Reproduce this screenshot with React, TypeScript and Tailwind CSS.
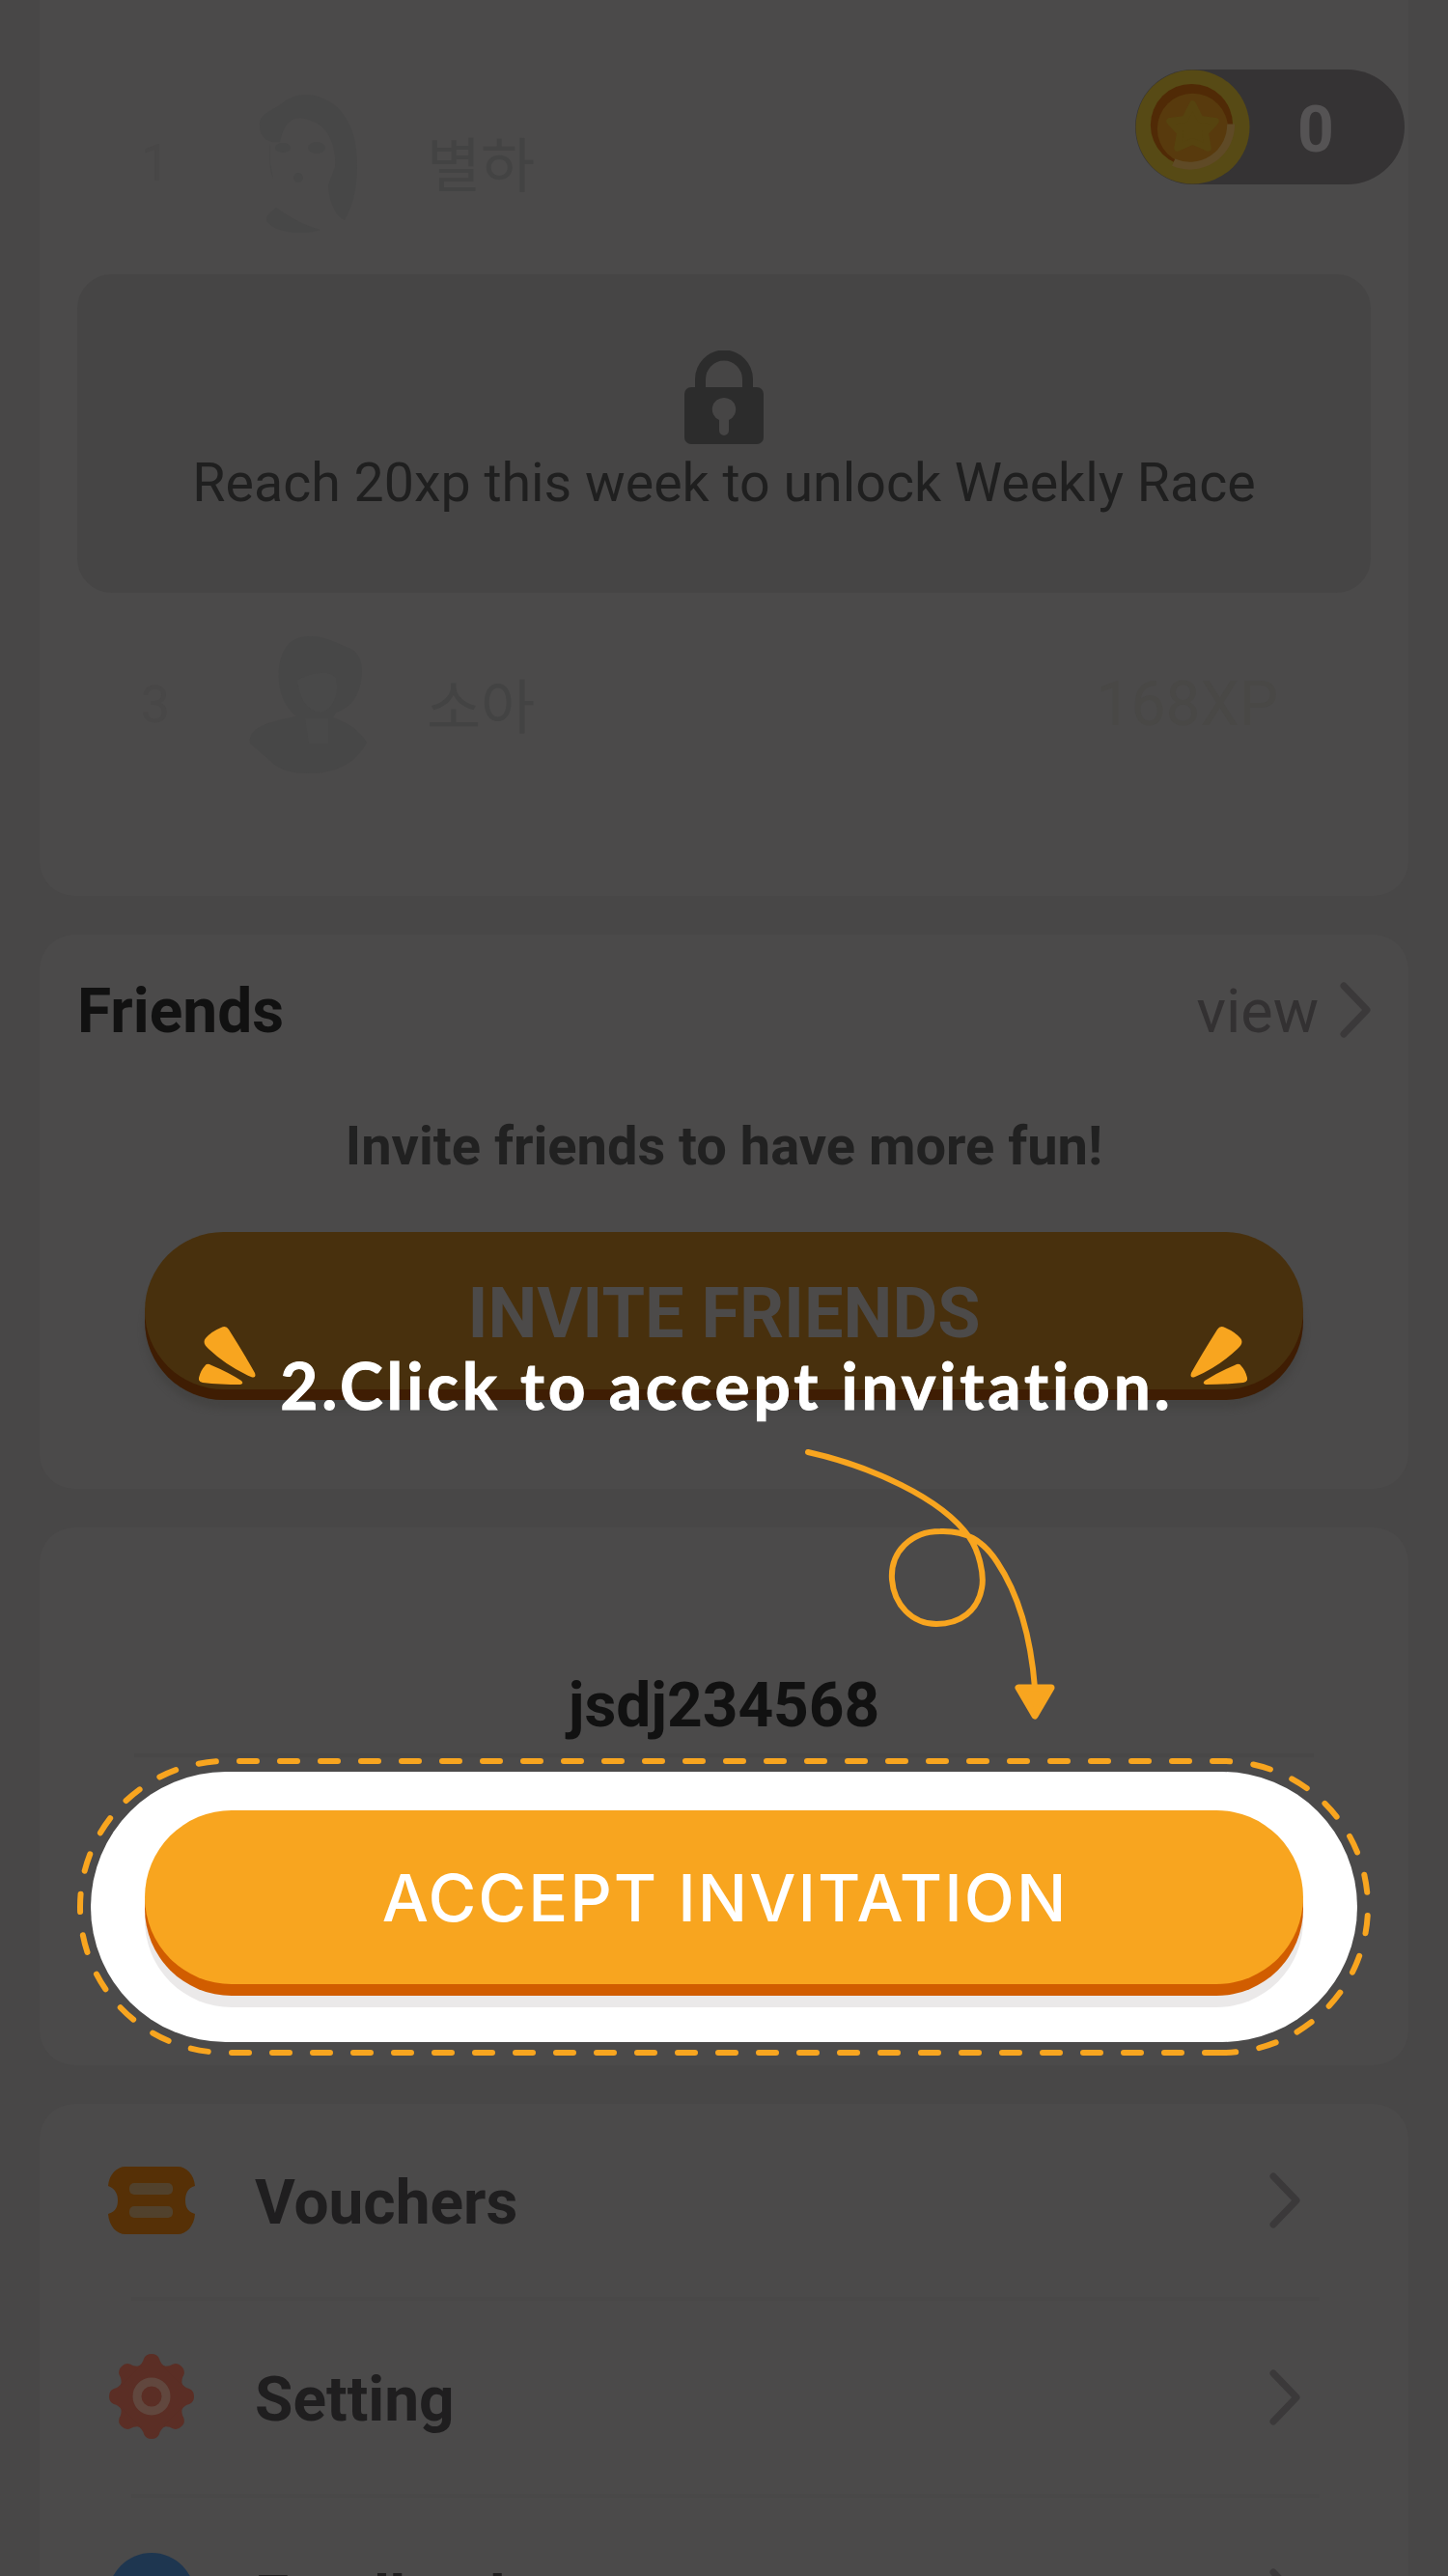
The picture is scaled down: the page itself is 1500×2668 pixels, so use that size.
import React from "react";

const ORANGE = "#f8a51f";

function Chevron({ className }: { className: string }) {
  return (
    <svg viewBox="0 0 32 58" className={className} fill="none" stroke="#3b393a" strokeWidth="7" strokeLinecap="round" strokeLinejoin="round">
      <path d="M4 4 28 29 4 54" />
    </svg>
  );
}

function Coin() {
  return (
    <svg viewBox="0 0 120 120" className="size-[119px] shrink-0">
      <circle cx="60" cy="60" r="59.5" fill="#574a15" />
      <circle cx="59" cy="58" r="43" fill="#502a06" />
      <circle cx="60" cy="62" r="37" fill="#583a0d" />
      <path d="M100 57A43 43 0 0 1 40 97" fill="none" stroke="#5f4a26" strokeWidth="8" />
      <path d="M60 36 68 52 84 54 73 66 76 82 60 75 44 82 47 66 36 54 52 52Z" fill="#56430f" stroke="#56430f" strokeWidth="7" strokeLinejoin="round" />
    </svg>
  );
}

function GirlAvatar() {
  return (
    <svg viewBox="0 0 124 144" className="h-[144px] w-[124px]" fill="#474747">
      <path d="M13 33C12 20 27 18 36 10C53-5 82 0 97 18C109 32 114 51 114 75C114 101 108 118 101 131C91 127 85 111 84 95L91 76C93 52 82 33 68 29C48 19 38 30 34 50C19 52 13 43 13 33Z" />
      <path d="M24 52C22 70 24 80 27 88L24 72Z M30 118C44 128 58 136 76 141C55 148 28 143 20 132C20 124 25 123 30 118Z" />
      <ellipse cx="37" cy="56" rx="8" ry="5" />
      <ellipse cx="72" cy="56" rx="9" ry="6" />
      <circle cx="53" cy="87" r="5" />
    </svg>
  );
}

function BoyAvatar() {
  return (
    <svg viewBox="0 0 124 144" className="h-[144px] w-[124px]" fill="#474747">
      <path d="M33 48C31 16 44 1 64 1C80 0 92 8 108 14C119 22 121 34 117 52C113 68 104 76 92 80L89 85C104 91 114 96 124 111C112 133 91 143 65 143C45 143 32 139 24 130L3 112C1 98 14 91 51 84C40 75 34 62 33 48Z" />
      <path d="M52 46C64 40 84 34 92 44C96 62 88 78 76 80C62 78 54 66 52 46Z" fill="#494949" />
      <path d="M60 86 84 86 84 112 64 112Z" fill="#494949" />
    </svg>
  );
}

function RaceRow({ rank, name, xp, children }: { rank: string; name: string; xp: string; children: React.ReactNode }) {
  return (
    <div className="flex h-[144px] items-center text-[#434343]">
      <div className="w-[162px] text-center text-[54px] leading-none text-[#484747]">{rank}</div>
      <div className="ml-[14px]">{children}</div>
      <div className="ml-[62px] flex-1 pb-[3px] font-['Noto_Sans_CJK_KR',sans-serif] text-[61px] leading-none">{name}</div>
      <div className="mr-[96px] text-[64px] leading-none text-[#494846]">{xp}</div>
    </div>
  );
}

function VoucherIcon() {
  return (
    <svg viewBox="0 0 90 70" className="h-[70px] w-[90px]">
      <path d="M18 0H72C81 0 89 8 90 20C82 22 80 29 80 35S82 47 90 49C89 62 81 70 72 70H18C9 70 1 62 0 49C8 47 10 41 10 35S8 23 0 20C1 8 9 0 18 0Z" fill="#563006" />
      <rect x="22" y="17" width="45" height="12" rx="5" fill="#51412c" />
      <rect x="22" y="41" width="45" height="12" rx="5" fill="#51412c" />
    </svg>
  );
}

function GearIcon() {
  return (
    <svg viewBox="-45 -45 90 90" className="-mt-[3px] size-[90px]">
      <g fill="#5b2e25">
        <circle r="34" />
        {[0, 45, 90, 135, 180, 225, 270, 315].map((a) => (
          <path key={a} transform={`rotate(${a})`} d="M-15-30Q-9-34-8-39Q-6-44 0-44T8-39Q9-34 15-30Z" />
        ))}
      </g>
      <circle r="15" fill="none" stroke="#61473e" strokeWidth="9" />
    </svg>
  );
}

function MenuRow({ icon, label, divider = true }: { icon: React.ReactNode; label: string; divider?: boolean }) {
  return (
    <div className="flex h-[204px] shrink-0 flex-col pl-[71px] pr-[92px]">
      <div className="flex flex-1 items-center">
        {icon}
        <span className="ml-[62px] flex-1 pt-[6px] text-[64px] font-bold leading-none text-[#1f1e1f]">{label}</span>
        <Chevron className="mr-[20px] h-[58px] w-[32px]" />
      </div>
      {divider && <div className="ml-[24px] h-[4px] bg-[#494848]" />}
    </div>
  );
}

function Sparks({ className }: { className: string }) {
  return (
    <svg viewBox="0 0 60 62" className={className} fill={ORANGE}>
      <path d="M23 2Q28-1 31 4Q48 31 58 49Q60 55 54 53Q29 42 10 24Q3 18 7 13Q13 6 23 2Z" />
      <path d="M6 42Q8 38 13 41Q30 48 44 57Q47 60 43 61Q22 61 4 59Q-1 58 0 54Q2 46 6 42Z" />
    </svg>
  );
}

function LoopArrow() {
  return (
    <svg viewBox="830 1496 264 288" className="absolute left-[830px] top-[1496px] h-[288px] w-[264px]">
      <path
        d="M837 1504C900 1518 975 1551 1004 1592C1014 1606 1020 1631 1017 1645C1013 1668 995 1682 970 1682C945 1682 926 1662 924 1636C922 1607 944 1586 974 1586C1000 1585 1018 1595 1033 1618C1057 1654 1068 1698 1072 1748"
        fill="none"
        stroke={ORANGE}
        strokeWidth="6"
        strokeLinecap="round"
      />
      <path d="M1055 1748H1089L1072 1777Z" fill={ORANGE} stroke={ORANGE} strokeWidth="7" strokeLinejoin="round" />
    </svg>
  );
}

function DashedOutline() {
  return (
    <svg
      viewBox="79 1820 1342 310"
      className="absolute -left-[15px] -top-[15px] h-[310px] w-[1342px] max-w-none"
      fill="none"
      stroke={ORANGE}
      strokeWidth="6"
      strokeLinecap="round"
      strokeDasharray="18 24"
    >
      <path d="M1266 2126H234" />
      <path d="M234 2126A151 151 0 0 1 234 1824" pathLength={466} strokeDashoffset={1032} />
      <path d="M234 1824H1266" strokeDashoffset={1498} />
      <path d="M1266 1824A151 151 0 0 1 1266 2126" pathLength={466} strokeDashoffset={2530} />
    </svg>
  );
}

export default function App() {
  return (
    <div className="relative flex h-[2668px] w-[1500px] flex-col gap-[40px] overflow-hidden bg-[#484747] px-[41px] font-[Roboto,sans-serif]">
      <section className="h-[928px] shrink-0 rounded-b-[36px] bg-[#4b4a4a] px-[39px] pt-[97px]">
        <RaceRow rank="1" name="별하" xp="">
          <GirlAvatar />
        </RaceRow>
        <div className="mt-[43px] flex h-[330px] flex-col items-center rounded-[36px] bg-[#464545] pt-[79px]">
          <svg viewBox="0 0 82 98" className="h-[98px] w-[82px]">
            <path d="M16.500 44V30a24.500 25 0 0 1 49 0V44" fill="none" stroke="#2c2c2c" strokeWidth="11" />
            <rect y="38" width="82" height="59" rx="7" fill="#2c2c2c" />
            <path d="M41 49a12 12 0 0 1 5 23V83a5 5 0 0 1-10 0V72a12 12 0 0 1 5-23Z" fill="#464545" />
          </svg>
          <p className="mt-[8px] whitespace-nowrap text-[55.500px] leading-[64px] text-[#1f1f1f]">Reach 20xp this week to unlock Weekly Race</p>
        </div>
        <div className="mt-[44px]">
          <RaceRow rank="3" name="소아" xp="168XP">
            <BoyAvatar />
          </RaceRow>
        </div>
      </section>

      <section className="flex h-[574px] shrink-0 flex-col rounded-[36px] bg-[#4b4a4a] px-[39px] pt-[40px]">
        <div className="flex h-[76px] items-center">
          <h2 className="flex-1 pt-[3px] text-[64px] font-bold leading-none text-[#111]">Friends</h2>
          <span className="pt-[3px] text-[63px] leading-none text-[#333132]">view</span>
          <Chevron className="ml-[22px] h-[58px] w-[32px]" />
        </div>
        <p className="mt-[70px] text-center text-[56px] font-bold leading-[66px] text-[#212121]">Invite friends to have more fun!</p>
        <button className="mx-[70px] mt-[56px] h-[163px] rounded-[82px] bg-[#48300d] pt-[7px] text-[72px] font-bold leading-none text-[#4c4a49] shadow-[0_11px_0_#3f1d03,0_20px_6px_#454443]">
          INVITE FRIENDS
        </button>
      </section>

      <section className="flex h-[557px] shrink-0 flex-col rounded-[36px] bg-[#4b4a4a] px-[98px] pt-[147px]">
        <p className="text-center text-[64px] font-bold leading-[76px] text-[#111]">jsdj234568</p>
        <div className="mt-[11px] h-[4px] bg-[#484747]" />
        <div className="relative -mx-[45px] mt-[15px] h-[280px] shrink-0 rounded-[140px] bg-white px-[56px] pt-[40px]">
          <DashedOutline />
          <button className="block h-[180px] w-full rounded-[90px] bg-[#f8a51f] pl-[2px] font-[Inter,sans-serif] text-[68px] font-medium tracking-[2px] text-white shadow-[0_12px_0_#d15d00,0_24px_0_#ebe9e9]">
            ACCEPT INVITATION
          </button>
        </div>
      </section>

      <section className="flex h-[700px] shrink-0 flex-col rounded-[36px] bg-[#4b4a4a]">
        <MenuRow icon={<VoucherIcon />} label="Vouchers" />
        <MenuRow icon={<GearIcon />} label="Setting" />
        <MenuRow icon={<div className="size-[90px] rounded-full bg-[#1e3650]" />} label="Feedback" divider={false} />
      </section>

      <div className="absolute left-[1176px] top-[72px] flex h-[119px] w-[279px] items-center rounded-full bg-[#353334]">
        <Coin />
        <span className="w-[136px] pt-[7px] text-center text-[66px] font-bold leading-none text-[#555354]">0</span>
      </div>

      <div className="absolute left-[206px] top-[1373px] flex">
        <Sparks className="h-[62px] w-[60px]" />
        <span className="ml-[24px] mr-[16px] mt-[30px] w-[926px] whitespace-nowrap text-center font-[Lato,sans-serif] text-[67.500px] font-bold leading-[62px] tracking-[3.900px] text-white [-webkit-text-stroke:1px_white]">
          2.Click to accept invitation.
        </span>
        <Sparks className="h-[62px] w-[60px] -scale-x-100" />
      </div>
      <LoopArrow />
    </div>
  );
}
